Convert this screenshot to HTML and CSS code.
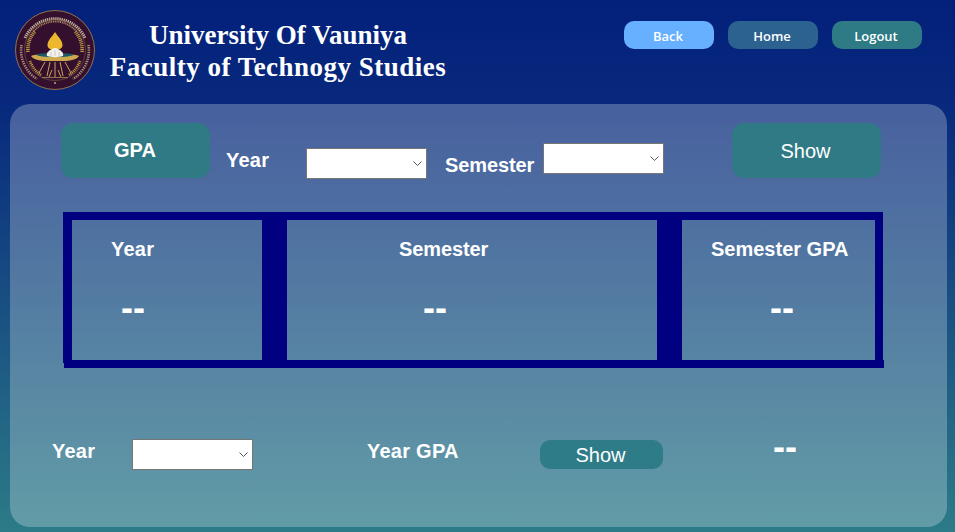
FILE: index.html
```html
<!DOCTYPE html>
<html lang="en">
<head>
<meta charset="utf-8">
<title>GPA - University Of Vauniya</title>
<link rel="stylesheet" href="styles.css">
</head>
<body>
<header class="top">
  <svg class="logo" viewBox="0 0 80 80" width="80" height="80" aria-hidden="true">
    <circle cx="40" cy="40" r="39.500" fill="#35102e" stroke="#94744c" stroke-width="1"/>
    <path d="M10 28A33 33 0 0 1 70 28" fill="none" stroke="#e6d8ba" stroke-width="3" stroke-dasharray="1.300 .8" opacity=".8"/>
    <path d="M6.500 35A34 34 0 0 0 22 69M73.500 35A34 34 0 0 1 58 69" fill="none" stroke="#d8c39a" stroke-width="2.600" stroke-dasharray="1.300 1" opacity=".7"/>
    <path d="M19 21A28 28 0 0 1 61 21" fill="none" stroke="#cba868" stroke-width="1.800" stroke-dasharray="1 .8" opacity=".85"/>
    <circle cx="40" cy="40" r="30.500" fill="none" stroke="#8f6d45" stroke-width=".5"/>
    <path d="M13 42A27.500 27.500 0 0 1 20 21M67 42A27.500 27.500 0 0 0 60 21" fill="none" stroke="#bd9745" stroke-width="3.600" stroke-dasharray="1.100 .8"/>
    <path d="M15 51A27.500 27.500 0 0 0 26 65M65 51A27.500 27.500 0 0 1 54 65" fill="none" stroke="#bd9745" stroke-width="2.800" stroke-dasharray="1.100 .8"/>
    <path d="M40 22C37 27 32.500 30 32.500 35.500C32.500 38 35 39 37 40H43C45 39 47.500 38 47.500 35.500C47.500 30 43 27 40 22Z" fill="#edb82f"/>
    <path d="M16 46C20 43 60 43 64 46C62 49 58 50 52 51H28C22 50 18 49 16 46Z" fill="#cfa94e"/>
    <ellipse cx="40" cy="45" rx="18" ry="2" fill="#1d5a68"/>
    <path d="M32 46C31 42 34 42 34.500 40C36 41 37 38 40 38C43 38 44 41 45.500 40C46 42 49 42 48 46C44 47.500 36 47.500 32 46Z" fill="#f3f1ea"/>
    <path d="M36 42V46M40 40V46M44 42V46" stroke="#b9b6ad" stroke-width=".6"/>
    <path d="M40 52V67M35 52L32 66M45 52L48 66M30 52L24 63M50 52L56 63M37 60L34 67M43 60L46 67" fill="none" stroke="#c9a356" stroke-width="1"/>
    <path d="M27 67.500H53" stroke="#94744c" stroke-width="1"/>
    <circle cx="40" cy="73" r=".9" fill="#c9b08a"/>
  </svg>
  <h1 class="title">University Of Vauniya<br><span class="title-wide">Faculty of Technogy Studies</span></h1>
  <nav class="nav">
    <a class="nav-btn nav-back">Back</a>
    <a class="nav-btn nav-home">Home</a>
    <a class="nav-btn nav-logout">Logout</a>
  </nav>
</header>

<main class="panel">
  <section class="filters">
    <div class="tag">GPA</div>
    <label class="label label-year">Year</label>
    <select class="pick pick-year"></select>
    <label class="label label-sem">Semester</label>
    <select class="pick pick-sem"></select>
    <button class="show show-big">Show</button>
  </section>

  <section class="results">
    <div class="cell cell-year">
      <div class="label">Year</div>
      <div class="dash">--</div>
    </div>
    <div class="cell cell-sem">
      <div class="label">Semester</div>
      <div class="dash">--</div>
    </div>
    <div class="cell cell-gpa">
      <div class="label">Semester GPA</div>
      <div class="dash">--</div>
    </div>
  </section>
  <div class="rule"></div>

  <section class="yearly">
    <label class="label yearly-label">Year</label>
    <select class="pick yearly-pick"></select>
    <label class="label yearly-gpa">Year GPA</label>
    <button class="show show-small">Show</button>
    <div class="dash yearly-dash">--</div>
  </section>
</main>
</body>
</html>
```

FILE: styles.css
```css
* { box-sizing: border-box; }

html, body { height: 100%; }

body {
  margin: 0;
  height: 532px;
  overflow: hidden;
  display: flex;
  flex-direction: column;
  background: linear-gradient(180deg, #03207b 0%, #08297d 20%, #2c7b88 100%);
  color: #fff;
  font-family: "Liberation Sans", Arial, sans-serif;
}

/* Header */
.top {
  height: 104px;
  flex: none;
  display: flex;
  align-items: flex-start;
  padding: 10px 33px 0 15px;
}

.logo { flex: none; }

.title {
  width: 364px;
  margin: 9px 0 0 1px;
  font-family: "Liberation Serif", "Times New Roman", serif;
  font-size: 27px;
  font-weight: 700;
  line-height: 32px;
  text-align: center;
}

.title-wide { letter-spacing: .48px; }

.nav {
  margin: 11px 0 0 auto;
  display: flex;
  gap: 14px;
}

.nav-btn {
  width: 90px;
  height: 28px;
  padding: 1px 2px 0 0;
  border-radius: 10px;
  display: flex;
  align-items: center;
  justify-content: center;
  font-family: "Open Sans", "Noto Sans", sans-serif;
  font-size: 13px;
  font-weight: 550;
  color: #fff;
}

.nav-back { background: #66b0ff; }
.nav-home { background: #2b6290; }
.nav-logout { background: #2e7a85; }

/* Panel */
.panel {
  flex: none;
  width: 937px;
  height: 423px;
  margin-left: 10px;
  padding: 19px 0 0 51px;
  border-radius: 20px;
  background: rgba(255, 255, 255, .26);
}

.label {
  font-size: 20px;
  font-weight: 700;
  line-height: 24px;
  white-space: nowrap;
}

.pick {
  appearance: none;
  width: 121px;
  height: 31px;
  padding: 0;
  border: 1px solid #767676;
  border-radius: 0;
  background: #fff url("data:image/svg+xml,%3Csvg xmlns='http://www.w3.org/2000/svg' width='9' height='5'%3E%3Cpath d='M.5.5l4 4 4-4' fill='none' stroke='%23555' stroke-width='1'/%3E%3C/svg%3E") no-repeat right 4px center;
  flex: none;
}

.show {
  border: 0;
  color: #fff;
  font-family: "Liberation Sans", Arial, sans-serif;
  font-size: 20px;
  font-weight: 400;
  padding: 0;
  flex: none;
}

.dash {
  font-size: 36px;
  font-weight: 700;
  line-height: 40px;
}

/* First row */
.filters {
  display: flex;
  align-items: flex-start;
  height: 89px;
}

.tag {
  width: 149px;
  height: 55px;
  border-radius: 12px;
  background: #2f7a85;
  font-size: 20px;
  font-weight: 700;
  display: flex;
  align-items: center;
  justify-content: center;
  padding: 0 1px 1px 0;
}

.label-year { margin: 25px 0 0 16px; width: 80px; letter-spacing: .25px; }
.pick-year { margin-top: 25px; }
.label-sem { margin: 30px 0 0 18px; width: 99px; letter-spacing: -.1px; }
.pick-sem { margin: 20px 0 0 -1px; }

.show-big {
  width: 149px;
  height: 55px;
  margin-left: 68px;
  padding: 2px 2px 0 0;
  border-radius: 12px;
  background: #2f7a85;
}

/* Results table */
.results {
  width: 820px;
  height: 151px;
  margin-left: 2px;
  display: grid;
  grid-template-columns: 190px 395px 218px;
  border: solid #000080;
  border-width: 8px 8px 0 9px;
}

.cell { padding-top: 17px; }

.cell .dash { margin-top: 27px; }

.cell-year { padding-left: 39px; }
.cell-year .label { letter-spacing: .25px; }
.cell-year .dash { margin-left: 10px; }

.cell-sem {
  padding-left: 112px;
  border-left: 25px solid #000080;
}
.cell-sem .label { letter-spacing: -.1px; }
.cell-sem .dash { margin-left: 24px; }

.cell-gpa {
  padding-left: 29px;
  border-left: 25px solid #000080;
}
.cell-gpa .dash { margin-left: 59px; }

.rule {
  width: 820px;
  height: 8px;
  margin: -3px 0 0 3px;
  background: #000080;
  position: relative;
}

/* Bottom row */
.yearly {
  display: flex;
  align-items: flex-start;
  margin: 71px 0 0 -9px;
}

.yearly-label { width: 80px; letter-spacing: .25px; }
.yearly-gpa { width: 173px; margin: 0 0 0 114px; letter-spacing: .25px; }

.show-small {
  width: 123px;
  height: 29px;
  margin-top: 1px;
  padding: 2px 2px 0 0;
  border-radius: 10px;
  background: #2d7c88;
}

.yearly-dash { margin: -12px 0 0 110px; }
```
